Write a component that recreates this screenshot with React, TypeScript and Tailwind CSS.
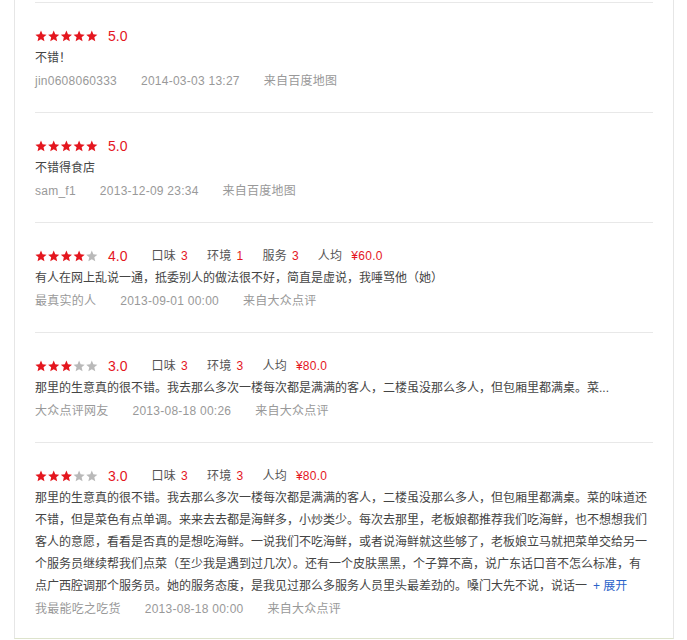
import React from "react";

type Review = {
  stars: number;
  scores?: { label: string; value: string }[];
  price?: string;
  lines: string[];
  more?: boolean;
  user: string;
  time: string;
  source: string;
};

const reviews: Review[] = [
  {
    stars: 5,
    lines: ["不错！"],
    user: "jin0608060333",
    time: "2014-03-03 13:27",
    source: "来自百度地图",
  },
  {
    stars: 5,
    lines: ["不错得食店"],
    user: "sam_f1",
    time: "2013-12-09 23:34",
    source: "来自百度地图",
  },
  {
    stars: 4,
    scores: [
      { label: "口味", value: "3" },
      { label: "环境", value: "1" },
      { label: "服务", value: "3" },
    ],
    price: "¥60.0",
    lines: ["有人在网上乱说一通，抵委别人的做法很不好，简直是虚说，我唾骂他（她）"],
    user: "最真实的人",
    time: "2013-09-01 00:00",
    source: "来自大众点评",
  },
  {
    stars: 3,
    scores: [
      { label: "口味", value: "3" },
      { label: "环境", value: "3" },
    ],
    price: "¥80.0",
    lines: ["那里的生意真的很不错。我去那么多次一楼每次都是满满的客人，二楼虽没那么多人，但包厢里都满桌。菜..."],
    user: "大众点评网友",
    time: "2013-08-18 00:26",
    source: "来自大众点评",
  },
  {
    stars: 3,
    scores: [
      { label: "口味", value: "3" },
      { label: "环境", value: "3" },
    ],
    price: "¥80.0",
    lines: [
      "那里的生意真的很不错。我去那么多次一楼每次都是满满的客人，二楼虽没那么多人，但包厢里都满桌。菜的味道还",
      "不错，但是菜色有点单调。来来去去都是海鲜多，小炒类少。每次去那里，老板娘都推荐我们吃海鲜，也不想想我们",
      "客人的意愿，看看是否真的是想吃海鲜。一说我们不吃海鲜，或者说海鲜就这些够了，老板娘立马就把菜单交给另一",
      "个服务员继续帮我们点菜（至少我是遇到过几次）。还有一个皮肤黑黑，个子算不高，说广东话口音不怎么标准，有",
      "点广西腔调那个服务员。她的服务态度，是我见过那么多服务人员里头最差劲的。嗓门大先不说，说话一",
    ],
    more: true,
    user: "我最能吃之吃货",
    time: "2013-08-18 00:00",
    source: "来自大众点评",
  },
];

const STAR =
  "M6 0.6l1.55 3.75 4.05 0.33-3.08 2.65 0.94 3.95L6 9.15 2.54 11.28l0.94-3.95L0.4 4.68l4.05-0.33z";

function Stars({ n }: { n: number }) {
  return (
    <svg width="63" height="12" viewBox="0 0 63 12" className="shrink-0">
      {[0, 1, 2, 3, 4].map((i) => (
        <path
          key={i}
          d={STAR}
          transform={`translate(${i * 12.7} 0)`}
          fill={i < n ? "#e4161e" : "#b9b9b9"}
        />
      ))}
    </svg>
  );
}

export default function App() {
  return (
    <div
      className="w-[687px] h-[640px] bg-white overflow-hidden"
      style={{ fontFamily: '"Liberation Sans", "Noto Sans CJK SC", sans-serif' }}
    >
      <div className="ml-[14px] w-[660px] border-x border-b border-x-[#e6e6e6] border-b-[#dde3cc] pt-[2px] px-[20px]">
        {reviews.map((r, idx) => (
          <div
            key={idx}
            className={`border-t border-[#e8e8e8] pt-[21px] ${
              idx === reviews.length - 1 ? "pb-[18px]" : "pb-[20px]"
            }`}
          >
            <div className="h-[23px] flex items-center">
              <Stars n={r.stars} />
              <span className="ml-[10px] text-[14px] text-[#e4161e] leading-none">
                {r.stars}.0
              </span>
              {r.scores && (
                <div className="ml-[24px] flex items-center text-[12px] tracking-[0.25px]">
                  {r.scores.map((s) => (
                    <span key={s.label} className="mr-[19px] text-[#555]">
                      {s.label}
                      <span className="ml-[5px] text-[#e4161e]">{s.value}</span>
                    </span>
                  ))}
                  <span className="text-[#555]">
                    人均
                    <span className="ml-[9px] text-[#e4161e]">{r.price}</span>
                  </span>
                </div>
              )}
            </div>
            <div className="text-[12px] leading-[22px] text-[#444]">
              {r.lines.map((l, i) => (
                <div key={i} className="whitespace-nowrap">
                  {l}
                  {r.more && i === r.lines.length - 1 && (
                    <span className="ml-[6px] text-[#2a62c9]">+ 展开</span>
                  )}
                </div>
              ))}
            </div>
            <div className="h-[23px] flex items-center text-[12px] tracking-[0.25px] text-[#999]">
              <span className="mr-[24px]">{r.user}</span>
              <span className="mr-[24px]">{r.time}</span>
              <span>{r.source}</span>
            </div>
          </div>
        ))}
      </div>
    </div>
  );
}
